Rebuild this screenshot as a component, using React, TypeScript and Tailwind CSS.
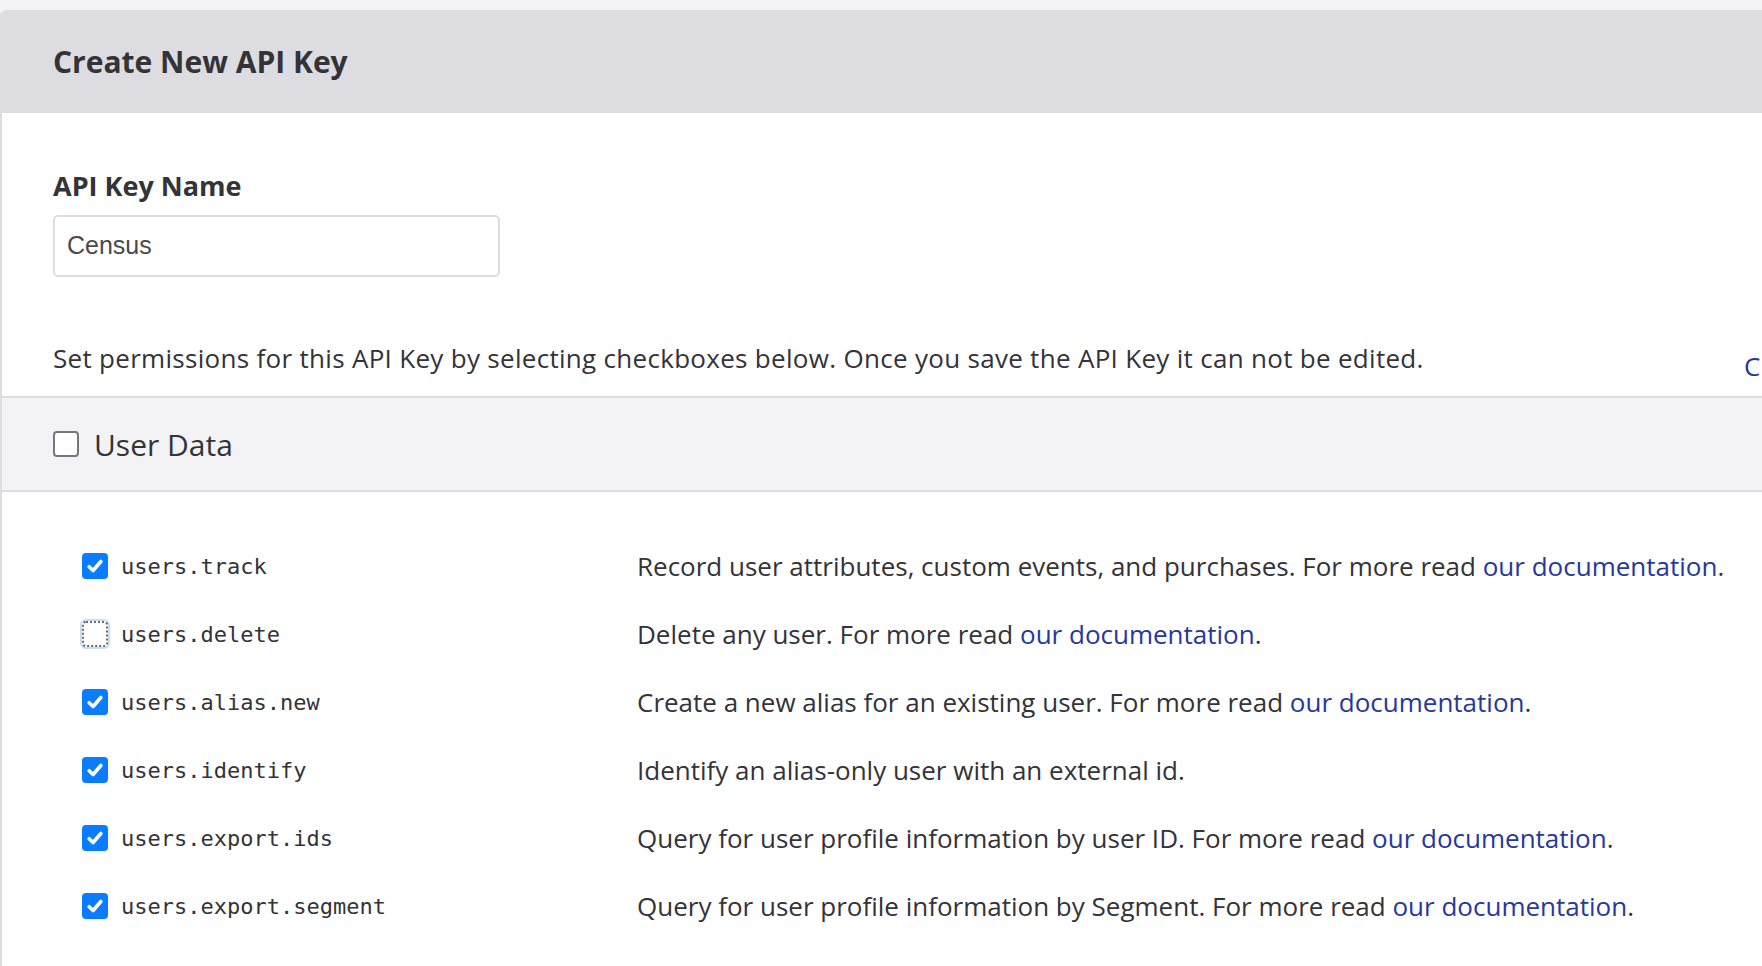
import React from "react";

const sans = "font-['Open_Sans','Noto_Sans',sans-serif]";
const mono = "font-['DejaVu_Sans_Mono','Liberation_Mono',monospace]";

type Permission = {
  name: string;
  checked: boolean;
  focused?: boolean;
  text: string;
  docs?: boolean;
};

const permissions: Permission[] = [
  {
    name: "users.track",
    checked: true,
    text: "Record user attributes, custom events, and purchases. For more read ",
    docs: true,
  },
  {
    name: "users.delete",
    checked: false,
    focused: true,
    text: "Delete any user. For more read ",
    docs: true,
  },
  {
    name: "users.alias.new",
    checked: true,
    text: "Create a new alias for an existing user. For more read ",
    docs: true,
  },
  {
    name: "users.identify",
    checked: true,
    text: "Identify an alias-only user with an external id.",
  },
  {
    name: "users.export.ids",
    checked: true,
    text: "Query for user profile information by user ID. For more read ",
    docs: true,
  },
  {
    name: "users.export.segment",
    checked: true,
    text: "Query for user profile information by Segment. For more read ",
    docs: true,
  },
];

function Checkbox({ checked, focused }: { checked: boolean; focused?: boolean }) {
  if (checked) {
    return (
      <span className="flex h-[26px] w-[26px] shrink-0 items-center justify-center rounded-[4px] bg-[#0a7cff]">
        <svg width="18" height="18" viewBox="0 0 16 16" fill="none">
          <path
            d="M2.8 8.6 L6.3 12 L13.2 4"
            stroke="white"
            strokeWidth="3.2"
            strokeLinecap="round"
            strokeLinejoin="round"
          />
        </svg>
      </span>
    );
  }
  return (
    <span
      className={
        focused
          ? "h-[26px] w-[26px] shrink-0 rounded-[4px] border-2 border-dotted border-[#6b6b6b] bg-white shadow-[0_0_0_2px_rgba(150,195,235,0.55)]"
          : "h-[26px] w-[26px] shrink-0 rounded-[4px] border-2 border-[#767676] bg-white"
      }
    />
  );
}

export default function App() {
  return (
    <div className={`h-[966px] w-full overflow-hidden bg-[#f3f3f5] pt-[10px] ${sans}`}>
      <div className="min-h-[956px] w-[1900px] overflow-hidden rounded-tl-[6px] border-l-2 border-[#dddce1] bg-white">
        {/* header */}
        <div className="flex h-[103px] items-center bg-[#dddce1] px-[51px]">
          <h1 className="text-[30px] font-bold text-[#333338]">Create New API Key</h1>
        </div>

        {/* key name */}
        <div className="px-[51px] pt-[57px]">
          <label className="block text-[27px] font-bold leading-[32px] text-[#333338]">
            API Key Name
          </label>
          <div className="mt-[13px] flex h-[62px] w-[447px] items-center rounded-[5px] border-2 border-[#dddce1] px-[12px] font-['Liberation_Sans',sans-serif] text-[25px] text-[#4a4a4a]">
            Census
          </div>
          <div className="mt-[66px] flex items-start pb-[23px]">
            <p className="w-[1691px] shrink-0 text-[26px] leading-[30px] tracking-[0.3px] text-[#333338]">
              Set permissions for this API Key by selecting checkboxes below. Once you save the API
              Key it can not be edited.
            </p>
            <span className="mt-[17px] shrink-0 whitespace-nowrap text-[26px] leading-[13px] text-[#26389b]">
              Check All
            </span>
          </div>
        </div>

        {/* group */}
        <div className="flex h-[96px] items-center gap-[15px] border-y-2 border-[#dddce1] bg-[#f3f3f5] px-[51px]">
          <Checkbox checked={false} />
          <span className="text-[30px] text-[#333338]">User Data</span>
        </div>

        {/* permission rows */}
        <div className="pt-[40px]">
          {permissions.map((p) => (
            <div key={p.name} className="flex h-[68px] items-center pl-[80px]">
              <div className="flex w-[555px] shrink-0 items-center gap-[13px]">
                <Checkbox checked={p.checked} focused={p.focused} />
                <span className={`text-[22px] text-[#333338] ${mono}`}>{p.name}</span>
              </div>
              <p className="text-[26px] text-[#333338]">
                {p.text}
                {p.docs && (
                  <>
                    <span className="text-[#26389b]">our documentation</span>.
                  </>
                )}
              </p>
            </div>
          ))}
        </div>
      </div>
    </div>
  );
}
